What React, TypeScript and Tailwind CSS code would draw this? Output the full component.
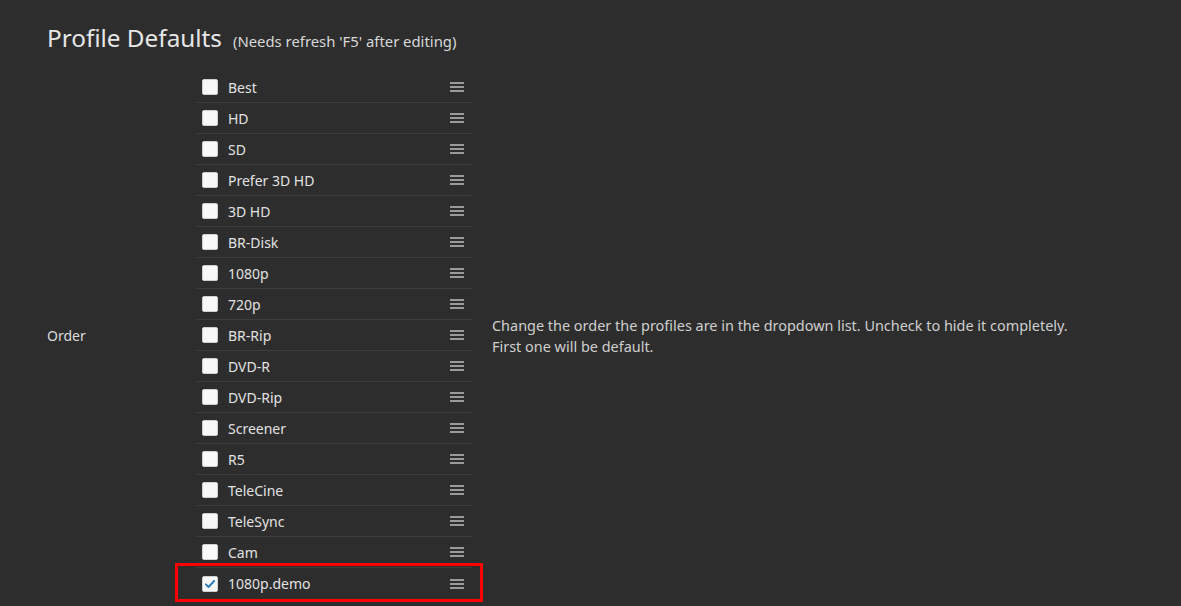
import { useState } from "react";

const initialProfiles = [
    { label: "Best", checked: false },
    { label: "HD", checked: false },
    { label: "SD", checked: false },
    { label: "Prefer 3D HD", checked: false },
    { label: "3D HD", checked: false },
    { label: "BR-Disk", checked: false },
    { label: "1080p", checked: false },
    { label: "720p", checked: false },
    { label: "BR-Rip", checked: false },
    { label: "DVD-R", checked: false },
    { label: "DVD-Rip", checked: false },
    { label: "Screener", checked: false },
    { label: "R5", checked: false },
    { label: "TeleCine", checked: false },
    { label: "TeleSync", checked: false },
    { label: "Cam", checked: false },
    { label: "1080p.demo", checked: true },
];

const Handle = () => (
    <div className="flex flex-col gap-[2px] w-[14px]">
        <span className="block h-[2px] bg-[#9a9a9a]" />
        <span className="block h-[2px] bg-[#9a9a9a]" />
        <span className="block h-[2px] bg-[#9a9a9a]" />
    </div>
);

const App = () => {
    const [profiles, setProfiles] = useState(initialProfiles);

    const toggle = (index: number) => {
        setProfiles(profiles.map((p, i) => (i === index ? { ...p, checked: !p.checked } : p)));
    };

    return (
        <div
            className="min-h-screen w-full bg-[#2d2d2d] text-[#dcdcdc] pl-[47px] pt-[26px]"
            style={{ fontFamily: '"Noto Sans", "Open Sans", sans-serif' }}
        >
            {/* Header */}
            <div className="flex items-baseline h-[38px]">
                <h1 className="text-[24.3px] text-[#e6e6e6] font-normal leading-none">Profile Defaults</h1>
                <span className="ml-[11px] text-[14.85px] text-[#d8d8d8]">(Needs refresh 'F5' after editing)</span>
            </div>

            {/* Order setting */}
            <div className="flex items-center mt-[8px]">
                <div className="w-[149px] text-[14px] text-[#dcdcdc]">Order</div>

                <ul className="w-[276px]">
                    {profiles.map((profile, index) => {
                        const last = index === profiles.length - 1;
                        return (
                            <li
                                key={profile.label}
                                className={`relative flex items-center h-[31px] pl-[6px] pr-[8px] ${last ? "" : "border-b border-[#3e3e3e]"}`}
                            >
                                <button
                                    onClick={() => toggle(index)}
                                    className="flex items-center justify-center w-[16px] h-[16px] rounded-[2px] bg-[#f8f8f8] border border-[#cfcfcf]"
                                >
                                    {profile.checked && (
                                        <svg viewBox="0 0 16 16" className="w-[12px] h-[12px]">
                                            <path d="M2.5 8.5 L6 12 L13.5 4" fill="none" stroke="#2b7bbd" strokeWidth="2.6" strokeLinecap="round" strokeLinejoin="round" />
                                        </svg>
                                    )}
                                </button>
                                <span className="ml-[10px] flex-1 text-[14px] text-[#e2e2e2]">{profile.label}</span>
                                <Handle />
                                {last && (
                                    <div className="absolute -left-[21px] -right-[11px] -top-[5px] -bottom-[3px] border-[3px] border-[#ff0000] pointer-events-none" />
                                )}
                            </li>
                        );
                    })}
                </ul>

                <p className="ml-[20px] text-[14.45px] leading-[21px] text-[#cfcfcf]">
                    Change the order the profiles are in the dropdown list. Uncheck to hide it completely.
                    <br />
                    First one will be default.
                </p>
            </div>
        </div>
    );
};

export default App;
